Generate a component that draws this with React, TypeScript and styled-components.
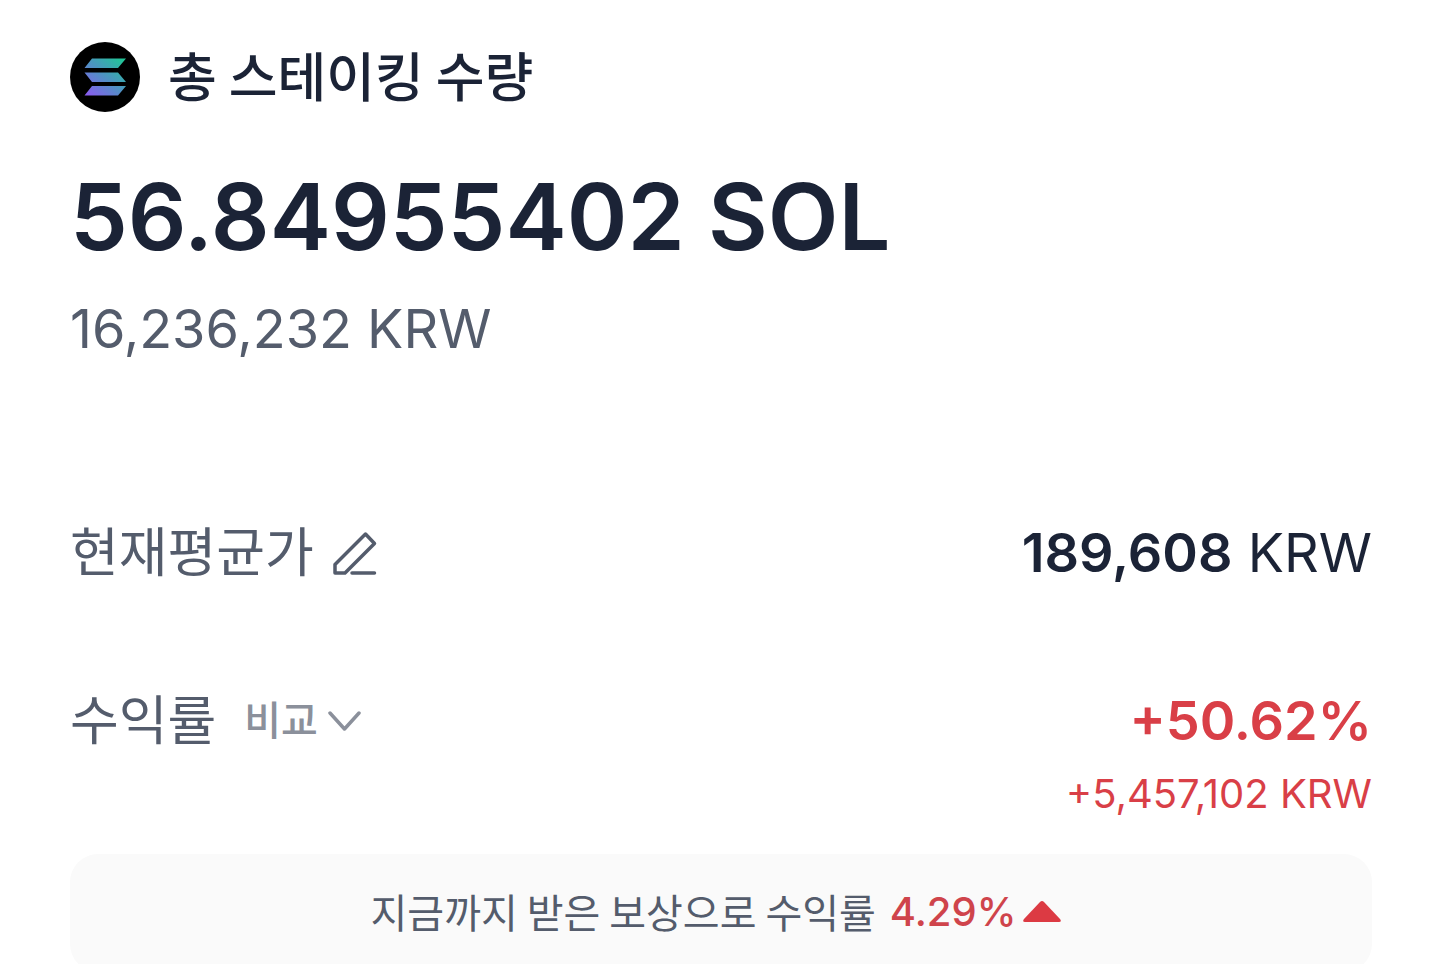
import React from "react";
import styled, { createGlobalStyle } from "styled-components";

const Global = createGlobalStyle`
  * { box-sizing: border-box; }
  html { scrollbar-width: none; }
  body { margin: 0; background: #fff; color: #1b2336; font-family: Inter, "Noto Sans CJK KR", sans-serif; }
  h1, p, dl, dt, dd { margin: 0; font-weight: 400; }
`;
const korean = `"Noto Sans CJK KR", sans-serif`;
const Page = styled.main`padding: 41px 64px 0 70px;`;
const Title = styled.h1`
  display: flex; align-items: center; gap: 28px;
`;
const TitleText = styled.span`
  padding-bottom: 6px; font-family: ${korean}; font-size: 53px; line-height: 66px; font-weight: 500;
`;
const Logo = styled.svg`width: 70px; height: 70px; flex: none;`;
const Amount = styled.p`
  margin-top: 46px; font-size: 92px; line-height: 116px; font-weight: 600;
`;
const Converted = styled.p`
  margin-top: 20px; font-size: 54px; line-height: 68px; color: #545c6c;
`;
const Stats = styled.dl`margin-top: 150px; display: grid; gap: 88px;`;
const Row = styled.div`display: flex; justify-content: space-between; align-items: flex-start;`;
const Label = styled.dt`
  display: flex; align-items: center; gap: 18px;
  font-size: 53px; line-height: 80px; color: #545c6c;
`;
const Value = styled.dd<{ $gain?: boolean }>`
  text-align: right; font-size: 54px; line-height: 80px;
  color: ${(p) => (p.$gain ? "#d93f47" : "#1b2336")};
`;
const Strong = styled.span`font-weight: 600;`;
const Profit = styled.p`font-size: 40px; line-height: 66px;`;
const IconButton = styled.button`
  display: flex; align-items: center; gap: 10px; padding: 0; border: 0; background: none;
  font: inherit; color: #545c6c; cursor: pointer;
`;
const CompareButton = styled(IconButton)`
  margin-left: 10px; font-size: 40px; font-weight: 500; color: #8b909b;
`;
const Notice = styled.p`
  display: flex; justify-content: center; align-items: center;
  margin-top: 27px; padding: 0 10px 4px 0; height: 118px; border-radius: 28px; background: #fafafa;
  font-family: ${korean}; font-size: 40px; color: #545c6c;
`;
const Rate = styled.span`
  margin: 0 7px 0 14px; font-family: Inter, sans-serif; font-weight: 500; color: #cf444b;
`;

export default function App() {
  return (
    <Page>
      <Global />
      <Title>
        <Logo viewBox="0 0 70 70" aria-hidden="true">
          <defs>
            <linearGradient id="sol" gradientUnits="userSpaceOnUse" x1="18" y1="54" x2="50" y2="16">
              <stop offset="0" stopColor="#8a5cf0" />
              <stop offset="0.5" stopColor="#5090c4" />
              <stop offset="1" stopColor="#22c498" />
            </linearGradient>
          </defs>
          <circle cx="35" cy="35" r="35" fill="#000" />
          <path fill="url(#sol)" d="M22 16.500h34l-8 9.500H14.500zM14.500 30.500H48l8 9.500H22zM22 44h34l-8 9.500H14.500z" />
        </Logo>
        <TitleText>총 스테이킹 수량</TitleText>
      </Title>
      <Amount>56.84955402 SOL</Amount>
      <Converted>16,236,232 KRW</Converted>
      <Stats>
        <Row>
          <Label>
            현재평균가
            <IconButton aria-label="평균가 수정">
              <svg width="46" height="46" viewBox="0 0 46 46" fill="none" stroke="currentColor" strokeWidth="3.5" strokeLinejoin="round" strokeLinecap="round">
                <path d="M3 34.500 33.500 4l9 9.500L13 43H3zM20 43h22.500" />
              </svg>
            </IconButton>
          </Label>
          <Value><Strong>189,608</Strong> KRW</Value>
        </Row>
        <Row>
          <Label>
            수익률
            <CompareButton>
              비교
              <svg width="34" height="22" viewBox="0 0 34 22" fill="none" stroke="currentColor" strokeWidth="3.5" strokeLinejoin="round" strokeLinecap="round">
                <path d="m2 3 14.500 16L31 3" />
              </svg>
            </CompareButton>
          </Label>
          <Value $gain>
            <Strong>+50.62%</Strong>
            <Profit>+5,457,102 KRW</Profit>
          </Value>
        </Row>
      </Stats>
      <Notice>
        지금까지 받은 보상으로 수익률
        <Rate>4.29%</Rate>
        <svg width="38" height="22" viewBox="0 0 38 22" aria-hidden="true">
          <path fill="#dc3a43" d="M17 2q2-2 4 0l16 17q2 3-1 3H2q-3 0-1-3z" />
        </svg>
      </Notice>
    </Page>
  );
}
